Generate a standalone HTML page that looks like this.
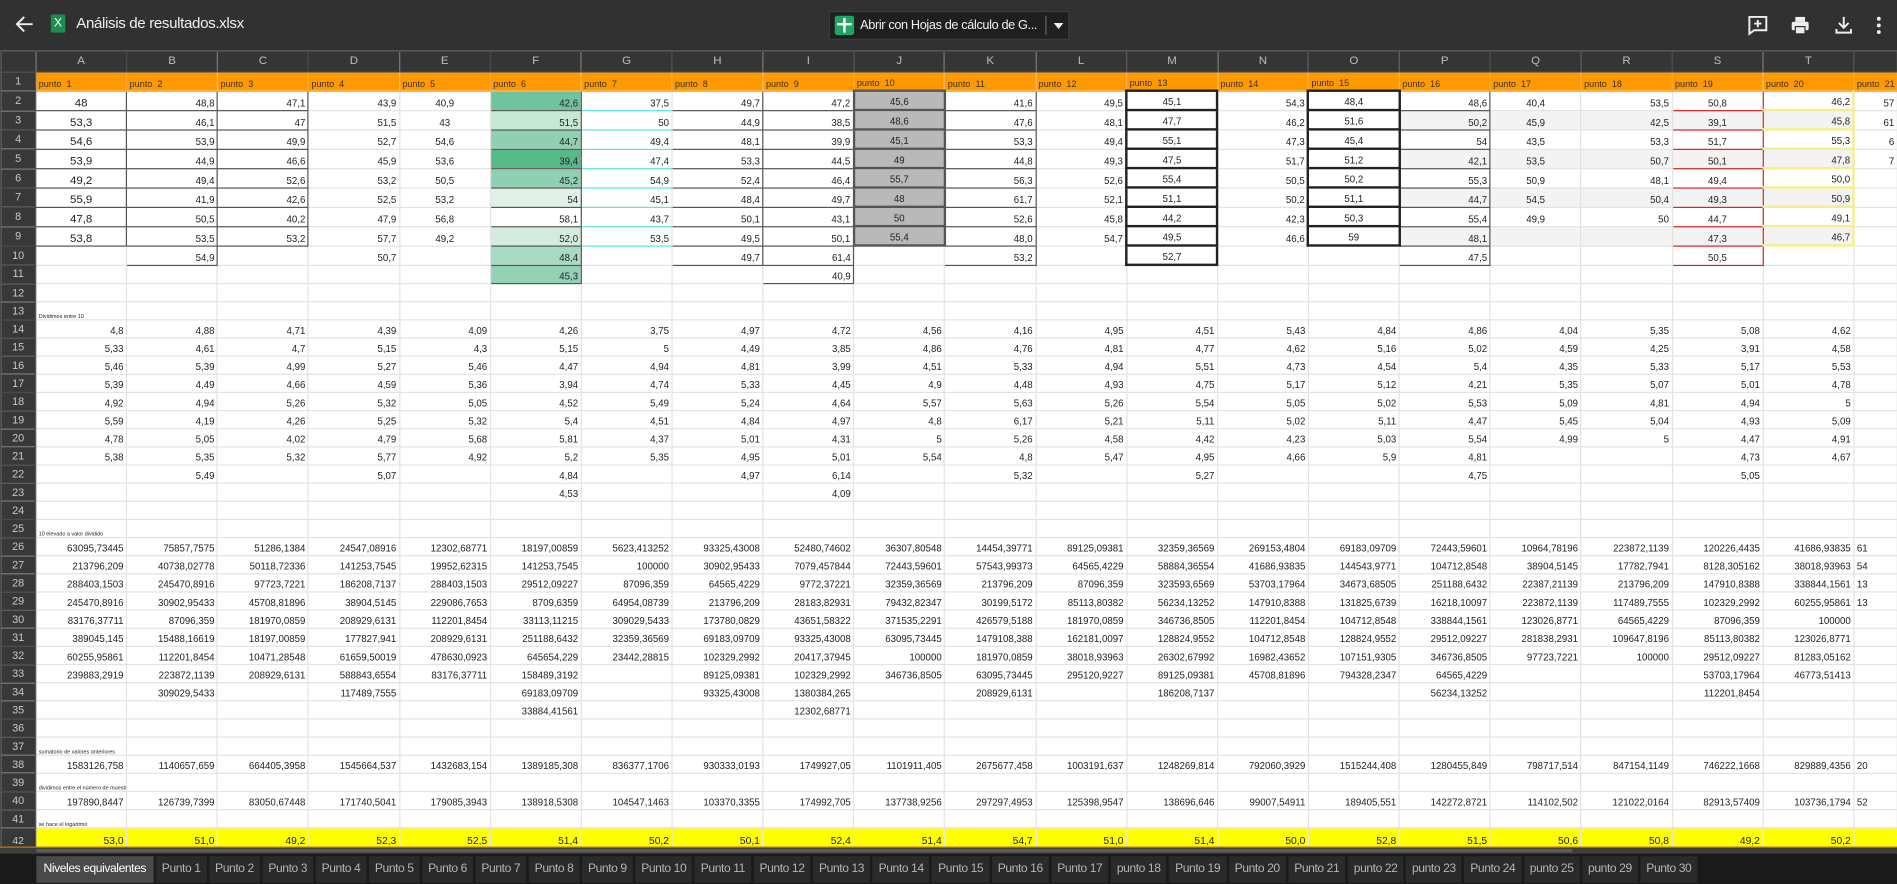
<!DOCTYPE html>
<html><head><meta charset="utf-8">
<style>
html,body{margin:0;padding:0;background:#1e1e1e;overflow:hidden;width:1897px;height:884px}
#w{position:absolute;left:0;top:0;width:1568px;height:731px;transform:scale(1.2098,1.2093);transform-origin:0 0;font-family:"Liberation Sans",sans-serif;background:#1e1e1e;overflow:hidden}
#tb{position:absolute;left:0;top:0;width:1568px;height:42px;background:#313131;border-bottom:1px solid #262626}
#grid{position:absolute;left:0;top:42px;width:1568px;height:659px;overflow:hidden;background:#fff}
table{border-collapse:collapse;table-layout:fixed;width:1568px}
td{border:1px solid #e3e3e3;padding:0 2px;height:14.0px;font-size:8px;line-height:10px;color:#222;text-align:right;vertical-align:bottom;white-space:nowrap;overflow:hidden}
tr.h td{height:16px;background:#353535;color:#bdbdbd;border-color:#4a4a4a;text-align:center;vertical-align:middle;font-size:9.5px}
td.r{background:#383838;color:#c8c8c8;border-color:#4a4a4a;text-align:center;vertical-align:middle;font-size:9px;line-height:9px;padding:0}
tr.o td{background:#ff9900;text-align:left;font-size:7.5px;color:#333;border-color:#ffa733}
tr.o td.r{background:#383838;color:#c8c8c8;border-color:#4a4a4a;text-align:center;font-size:9px}
tr.y td{background:#ffff00;vertical-align:top;font-size:8.5px;line-height:9px;padding-top:6px}
tr.y td.r{background:#383838;padding-top:0;vertical-align:middle}
.c{text-align:center}
.b{border:1px solid #555}
.k{border:2px solid #222}
.g{border-bottom:1px solid #5fe3e3}
.j{background:#b9b9b9;border:2px solid #555;text-align:center}
.s{border:1.5px solid #d22;text-align:center}
.t{border-bottom:2px solid #f3ef8a;border-right:2px solid #f3ef8a}
.q{background:#f3f3f3}
.tiny td{font-size:4.5px;line-height:5px;text-align:left}
.tiny td.r{font-size:9px;line-height:9px;text-align:center}
.L{border-right:1px solid #222}
#tabs{position:absolute;left:0;top:706px;height:25px;width:1568px;background:#1a1a1a;display:flex;align-items:center;padding-left:30px;box-sizing:border-box}
#tabs span{background:#2a2a2a;color:#b5b5b5;font-size:10px;height:22px;line-height:22px;padding:0 5px;margin-right:2px;letter-spacing:-0.35px}
#tabs span.a{background:#4a4a4a;color:#fff;padding:0 6px}
#sb{position:absolute;left:0;top:700px;height:6px;width:1568px;background:#3d3d3d;border-top:1px solid #c87a10}
</style></head><body><div id="w">
<div id="tb">
<svg style="position:absolute;left:12px;top:12px" width="16" height="16" viewBox="0 0 16 16"><path d="M15 8H2M8 2L2 8l6 6" stroke="#eee" stroke-width="1.6" fill="none"/></svg>
<div style="position:absolute;left:42px;top:12px;width:12px;height:15px;background:#1e8e4e;color:#fff;font-size:10px;line-height:15px;text-align:center;border-radius:1px">X</div>
<div style="position:absolute;left:63px;top:12px;color:#f0f0f0;font-size:12.5px;letter-spacing:-0.3px">Análisis de resultados.xlsx</div>
<div style="position:absolute;left:685px;top:9px;width:199px;height:24px;background:#1f1f1f;border:1px solid #3e3e3e;box-sizing:border-box">
<div style="position:absolute;left:4px;top:3px;width:16px;height:16px;background:#1fa463;border-radius:2px"></div>
<div style="position:absolute;left:11px;top:5px;width:2px;height:12px;background:#fff"></div>
<div style="position:absolute;left:6px;top:9px;width:12px;height:2px;background:#fff"></div>
<div style="position:absolute;left:25px;top:5px;color:#f2f2f2;font-size:10.5px;letter-spacing:-0.3px">Abrir con Hojas de cálculo de G...</div>
<div style="position:absolute;left:178px;top:3px;width:1px;height:16px;background:#666"></div>
<div style="position:absolute;left:185px;top:9px;width:0;height:0;border-left:4px solid transparent;border-right:4px solid transparent;border-top:5px solid #eee"></div>
</div>
<svg style="position:absolute;left:1444px;top:12px" width="18" height="18" viewBox="0 0 18 18"><path d="M2 2h14v11H6l-4 3z" stroke="#eee" stroke-width="1.6" fill="none"/><path d="M9 4.5v6M6 7.5h6" stroke="#eee" stroke-width="1.6"/></svg>
<svg style="position:absolute;left:1479px;top:12px" width="18" height="18" viewBox="0 0 18 18"><rect x="5" y="2" width="8" height="4" fill="#eee"/><rect x="2" y="6" width="14" height="7" rx="1.5" fill="#eee"/><rect x="5" y="10" width="8" height="6" fill="#eee" stroke="#313131" stroke-width="1"/></svg>
<svg style="position:absolute;left:1515px;top:12px" width="18" height="18" viewBox="0 0 18 18"><path d="M9 2v9M5 7l4 4 4-4M3 12v3h12v-3" stroke="#eee" stroke-width="1.6" fill="none"/></svg>
<svg style="position:absolute;left:1548px;top:12px" width="10" height="18" viewBox="0 0 10 18"><circle cx="5" cy="3.5" r="1.6" fill="#eee"/><circle cx="5" cy="9" r="1.6" fill="#eee"/><circle cx="5" cy="14.5" r="1.6" fill="#eee"/></svg>
</div>
<div id="grid"><table>
<colgroup><col style="width:29px"><col span="20" style="width:75.15px"><col style="width:36px"></colgroup>
<tr class="h"><td></td><td>A</td><td>B</td><td>C</td><td>D</td><td>E</td><td>F</td><td>G</td><td>H</td><td>I</td><td>J</td><td>K</td><td>L</td><td>M</td><td>N</td><td>O</td><td>P</td><td>Q</td><td>R</td><td>S</td><td>T</td><td></td></tr>
<tr class="o"><td class="r">1</td><td>punto &nbsp;1</td><td>punto &nbsp;2</td><td>punto &nbsp;3</td><td>punto &nbsp;4</td><td>punto &nbsp;5</td><td>punto &nbsp;6</td><td>punto &nbsp;7</td><td>punto &nbsp;8</td><td>punto &nbsp;9</td><td>punto &nbsp;10</td><td>punto &nbsp;11</td><td>punto &nbsp;12</td><td>punto &nbsp;13</td><td>punto &nbsp;14</td><td>punto &nbsp;15</td><td>punto &nbsp;16</td><td>punto &nbsp;17</td><td>punto &nbsp;18</td><td>punto &nbsp;19</td><td>punto &nbsp;20</td><td class="L" style="border-left:1px solid #222">punto &nbsp;21</td></tr>
<tr><td class="r">2</td><td class="c b" style="font-size:9.5px">48</td><td class="b">48,8</td><td class="b">47,1</td><td>43,9</td><td class="c">40,9</td><td class="b" style="background:#6fc49d">42,6</td><td class="g">37,5</td><td class="b">49,7</td><td class="b">47,2</td><td class="j">45,6</td><td class="b">41,6</td><td>49,5</td><td class="c k">45,1</td><td>54,3</td><td class="c k">48,4</td><td class="b">48,6</td><td class="c">40,4</td><td>53,5</td><td class="s">50,8</td><td class="t">46,2</td><td style="border-left:1px solid #222">57</td></tr>
<tr><td class="r">3</td><td class="c b" style="font-size:9.5px">53,3</td><td class="b">46,1</td><td class="b">47</td><td>51,5</td><td class="c">43</td><td class="b" style="background:#c8e8d6">51,5</td><td class="g">50</td><td class="b">44,9</td><td class="b">38,5</td><td class="j">48,6</td><td class="b">47,6</td><td>48,1</td><td class="c k">47,7</td><td>46,2</td><td class="c k">51,6</td><td class="b q">50,2</td><td class="c q">45,9</td><td class="q">42,5</td><td class="s q">39,1</td><td class="t q">45,8</td><td style="border-left:1px solid #222">61</td></tr>
<tr><td class="r">4</td><td class="c b" style="font-size:9.5px">54,6</td><td class="b">53,9</td><td class="b">49,9</td><td>52,7</td><td class="c">54,6</td><td class="b" style="background:#8fd0b2">44,7</td><td class="g">49,4</td><td class="b">48,1</td><td class="b">39,9</td><td class="j">45,1</td><td class="b">53,3</td><td>49,4</td><td class="c k">55,1</td><td>47,3</td><td class="c k">45,4</td><td class="b">54</td><td class="c">43,5</td><td>53,3</td><td class="s">51,7</td><td class="t">55,3</td><td style="border-left:1px solid #222">6</td></tr>
<tr><td class="r">5</td><td class="c b" style="font-size:9.5px">53,9</td><td class="b">44,9</td><td class="b">46,6</td><td>45,9</td><td class="c">53,6</td><td class="b" style="background:#57b98a">39,4</td><td class="g">47,4</td><td class="b">53,3</td><td class="b">44,5</td><td class="j">49</td><td class="b">44,8</td><td>49,3</td><td class="c k">47,5</td><td>51,7</td><td class="c k">51,2</td><td class="b q">42,1</td><td class="c q">53,5</td><td class="q">50,7</td><td class="s q">50,1</td><td class="t q">47,8</td><td style="border-left:1px solid #222">7</td></tr>
<tr><td class="r">6</td><td class="c b" style="font-size:9.5px">49,2</td><td class="b">49,4</td><td class="b">52,6</td><td>53,2</td><td class="c">50,5</td><td class="b" style="background:#8fd0b2">45,2</td><td class="g">54,9</td><td class="b">52,4</td><td class="b">46,4</td><td class="j">55,7</td><td class="b">56,3</td><td>52,6</td><td class="c k">55,4</td><td>50,5</td><td class="c k">50,2</td><td class="b">55,3</td><td class="c">50,9</td><td>48,1</td><td class="s">49,4</td><td class="t">50,0</td><td style="border-left:1px solid #222"></td></tr>
<tr><td class="r">7</td><td class="c b" style="font-size:9.5px">55,9</td><td class="b">41,9</td><td class="b">42,6</td><td>52,5</td><td class="c">53,2</td><td class="b" style="background:#dff1e7">54</td><td class="g">45,1</td><td class="b">48,4</td><td class="b">49,7</td><td class="j">48</td><td class="b">61,7</td><td>52,1</td><td class="c k">51,1</td><td>50,2</td><td class="c k">51,1</td><td class="b q">44,7</td><td class="c q">54,5</td><td class="q">50,4</td><td class="s q">49,3</td><td class="t q">50,9</td><td style="border-left:1px solid #222"></td></tr>
<tr><td class="r">8</td><td class="c b" style="font-size:9.5px">47,8</td><td class="b">50,5</td><td class="b">40,2</td><td>47,9</td><td class="c">56,8</td><td class="b">58,1</td><td class="g">43,7</td><td class="b">50,1</td><td class="b">43,1</td><td class="j">50</td><td class="b">52,6</td><td>45,8</td><td class="c k">44,2</td><td>42,3</td><td class="c k">50,3</td><td class="b">55,4</td><td class="c">49,9</td><td>50</td><td class="s">44,7</td><td class="t">49,1</td><td style="border-left:1px solid #222"></td></tr>
<tr><td class="r">9</td><td class="c b" style="font-size:9.5px">53,8</td><td class="b">53,5</td><td class="b">53,2</td><td>57,7</td><td class="c">49,2</td><td class="b" style="background:#d3ecde">52,0</td><td class="g">53,5</td><td class="b">49,5</td><td class="b">50,1</td><td class="j">55,4</td><td class="b">48,0</td><td>54,7</td><td class="c k">49,5</td><td>46,6</td><td class="c k">59</td><td class="b q">48,1</td><td class="q"></td><td class="q"></td><td class="s q">47,3</td><td class="t q">46,7</td><td style="border-left:1px solid #222"></td></tr>
<tr><td class="r">10</td><td></td><td class="b">54,9</td><td></td><td>50,7</td><td></td><td class="b" style="background:#a8dbc3">48,4</td><td></td><td class="b">49,7</td><td class="b">61,4</td><td></td><td class="b">53,2</td><td></td><td class="c k">52,7</td><td></td><td></td><td class="b">47,5</td><td></td><td></td><td class="s">50,5</td><td></td><td style="border-left:1px solid #222"></td></tr>
<tr><td class="r">11</td><td></td><td></td><td></td><td></td><td></td><td class="b" style="background:#93d2b5">45,3</td><td></td><td></td><td class="b">40,9</td><td></td><td></td><td></td><td></td><td></td><td></td><td></td><td></td><td></td><td></td><td></td><td style="border-left:1px solid #222"></td></tr>
<tr><td class="r">12</td><td></td><td></td><td></td><td></td><td></td><td></td><td></td><td></td><td></td><td></td><td></td><td></td><td></td><td></td><td></td><td></td><td></td><td></td><td></td><td></td><td style="border-left:1px solid #222"></td></tr>
<tr class="tiny"><td class="r">13</td><td>Dividimos entre 10</td><td></td><td></td><td></td><td></td><td></td><td></td><td></td><td></td><td></td><td></td><td></td><td></td><td></td><td></td><td></td><td></td><td></td><td></td><td></td><td style="border-left:1px solid #222"></td></tr>
<tr><td class="r">14</td><td>4,8</td><td>4,88</td><td>4,71</td><td>4,39</td><td>4,09</td><td>4,26</td><td>3,75</td><td>4,97</td><td>4,72</td><td>4,56</td><td>4,16</td><td>4,95</td><td>4,51</td><td>5,43</td><td>4,84</td><td>4,86</td><td>4,04</td><td>5,35</td><td>5,08</td><td>4,62</td><td style="border-left:1px solid #222"></td></tr>
<tr><td class="r">15</td><td>5,33</td><td>4,61</td><td>4,7</td><td>5,15</td><td>4,3</td><td>5,15</td><td>5</td><td>4,49</td><td>3,85</td><td>4,86</td><td>4,76</td><td>4,81</td><td>4,77</td><td>4,62</td><td>5,16</td><td>5,02</td><td>4,59</td><td>4,25</td><td>3,91</td><td>4,58</td><td style="border-left:1px solid #222"></td></tr>
<tr><td class="r">16</td><td>5,46</td><td>5,39</td><td>4,99</td><td>5,27</td><td>5,46</td><td>4,47</td><td>4,94</td><td>4,81</td><td>3,99</td><td>4,51</td><td>5,33</td><td>4,94</td><td>5,51</td><td>4,73</td><td>4,54</td><td>5,4</td><td>4,35</td><td>5,33</td><td>5,17</td><td>5,53</td><td style="border-left:1px solid #222"></td></tr>
<tr><td class="r">17</td><td>5,39</td><td>4,49</td><td>4,66</td><td>4,59</td><td>5,36</td><td>3,94</td><td>4,74</td><td>5,33</td><td>4,45</td><td>4,9</td><td>4,48</td><td>4,93</td><td>4,75</td><td>5,17</td><td>5,12</td><td>4,21</td><td>5,35</td><td>5,07</td><td>5,01</td><td>4,78</td><td style="border-left:1px solid #222"></td></tr>
<tr><td class="r">18</td><td>4,92</td><td>4,94</td><td>5,26</td><td>5,32</td><td>5,05</td><td>4,52</td><td>5,49</td><td>5,24</td><td>4,64</td><td>5,57</td><td>5,63</td><td>5,26</td><td>5,54</td><td>5,05</td><td>5,02</td><td>5,53</td><td>5,09</td><td>4,81</td><td>4,94</td><td>5</td><td style="border-left:1px solid #222"></td></tr>
<tr><td class="r">19</td><td>5,59</td><td>4,19</td><td>4,26</td><td>5,25</td><td>5,32</td><td>5,4</td><td>4,51</td><td>4,84</td><td>4,97</td><td>4,8</td><td>6,17</td><td>5,21</td><td>5,11</td><td>5,02</td><td>5,11</td><td>4,47</td><td>5,45</td><td>5,04</td><td>4,93</td><td>5,09</td><td style="border-left:1px solid #222"></td></tr>
<tr><td class="r">20</td><td>4,78</td><td>5,05</td><td>4,02</td><td>4,79</td><td>5,68</td><td>5,81</td><td>4,37</td><td>5,01</td><td>4,31</td><td>5</td><td>5,26</td><td>4,58</td><td>4,42</td><td>4,23</td><td>5,03</td><td>5,54</td><td>4,99</td><td>5</td><td>4,47</td><td>4,91</td><td style="border-left:1px solid #222"></td></tr>
<tr><td class="r">21</td><td>5,38</td><td>5,35</td><td>5,32</td><td>5,77</td><td>4,92</td><td>5,2</td><td>5,35</td><td>4,95</td><td>5,01</td><td>5,54</td><td>4,8</td><td>5,47</td><td>4,95</td><td>4,66</td><td>5,9</td><td>4,81</td><td></td><td></td><td>4,73</td><td>4,67</td><td style="border-left:1px solid #222"></td></tr>
<tr><td class="r">22</td><td></td><td>5,49</td><td></td><td>5,07</td><td></td><td>4,84</td><td></td><td>4,97</td><td>6,14</td><td></td><td>5,32</td><td></td><td>5,27</td><td></td><td></td><td>4,75</td><td></td><td></td><td>5,05</td><td></td><td style="border-left:1px solid #222"></td></tr>
<tr><td class="r">23</td><td></td><td></td><td></td><td></td><td></td><td>4,53</td><td></td><td></td><td>4,09</td><td></td><td></td><td></td><td></td><td></td><td></td><td></td><td></td><td></td><td></td><td></td><td style="border-left:1px solid #222"></td></tr>
<tr><td class="r">24</td><td></td><td></td><td></td><td></td><td></td><td></td><td></td><td></td><td></td><td></td><td></td><td></td><td></td><td></td><td></td><td></td><td></td><td></td><td></td><td></td><td style="border-left:1px solid #222"></td></tr>
<tr class="tiny"><td class="r">25</td><td>10 elevado a valor dividido</td><td></td><td></td><td></td><td></td><td></td><td></td><td></td><td></td><td></td><td></td><td></td><td></td><td></td><td></td><td></td><td></td><td></td><td></td><td></td><td style="border-left:1px solid #222"></td></tr>
<tr><td class="r">26</td><td>63095,73445</td><td>75857,7575</td><td>51286,1384</td><td>24547,08916</td><td>12302,68771</td><td>18197,00859</td><td>5623,413252</td><td>93325,43008</td><td>52480,74602</td><td>36307,80548</td><td>14454,39771</td><td>89125,09381</td><td>32359,36569</td><td>269153,4804</td><td>69183,09709</td><td>72443,59601</td><td>10964,78196</td><td>223872,1139</td><td>120226,4435</td><td>41686,93835</td><td style="border-left:1px solid #222;text-align:left">61</td></tr>
<tr><td class="r">27</td><td>213796,209</td><td>40738,02778</td><td>50118,72336</td><td>141253,7545</td><td>19952,62315</td><td>141253,7545</td><td>100000</td><td>30902,95433</td><td>7079,457844</td><td>72443,59601</td><td>57543,99373</td><td>64565,4229</td><td>58884,36554</td><td>41686,93835</td><td>144543,9771</td><td>104712,8548</td><td>38904,5145</td><td>17782,7941</td><td>8128,305162</td><td>38018,93963</td><td style="border-left:1px solid #222;text-align:left">54</td></tr>
<tr><td class="r">28</td><td>288403,1503</td><td>245470,8916</td><td>97723,7221</td><td>186208,7137</td><td>288403,1503</td><td>29512,09227</td><td>87096,359</td><td>64565,4229</td><td>9772,37221</td><td>32359,36569</td><td>213796,209</td><td>87096,359</td><td>323593,6569</td><td>53703,17964</td><td>34673,68505</td><td>251188,6432</td><td>22387,21139</td><td>213796,209</td><td>147910,8388</td><td>338844,1561</td><td style="border-left:1px solid #222;text-align:left">13</td></tr>
<tr><td class="r">29</td><td>245470,8916</td><td>30902,95433</td><td>45708,81896</td><td>38904,5145</td><td>229086,7653</td><td>8709,6359</td><td>64954,08739</td><td>213796,209</td><td>28183,82931</td><td>79432,82347</td><td>30199,5172</td><td>85113,80382</td><td>56234,13252</td><td>147910,8388</td><td>131825,6739</td><td>16218,10097</td><td>223872,1139</td><td>117489,7555</td><td>102329,2992</td><td>60255,95861</td><td style="border-left:1px solid #222;text-align:left">13</td></tr>
<tr><td class="r">30</td><td>83176,37711</td><td>87096,359</td><td>181970,0859</td><td>208929,6131</td><td>112201,8454</td><td>33113,11215</td><td>309029,5433</td><td>173780,0829</td><td>43651,58322</td><td>371535,2291</td><td>426579,5188</td><td>181970,0859</td><td>346736,8505</td><td>112201,8454</td><td>104712,8548</td><td>338844,1561</td><td>123026,8771</td><td>64565,4229</td><td>87096,359</td><td>100000</td><td style="border-left:1px solid #222"></td></tr>
<tr><td class="r">31</td><td>389045,145</td><td>15488,16619</td><td>18197,00859</td><td>177827,941</td><td>208929,6131</td><td>251188,6432</td><td>32359,36569</td><td>69183,09709</td><td>93325,43008</td><td>63095,73445</td><td>1479108,388</td><td>162181,0097</td><td>128824,9552</td><td>104712,8548</td><td>128824,9552</td><td>29512,09227</td><td>281838,2931</td><td>109647,8196</td><td>85113,80382</td><td>123026,8771</td><td style="border-left:1px solid #222"></td></tr>
<tr><td class="r">32</td><td>60255,95861</td><td>112201,8454</td><td>10471,28548</td><td>61659,50019</td><td>478630,0923</td><td>645654,229</td><td>23442,28815</td><td>102329,2992</td><td>20417,37945</td><td>100000</td><td>181970,0859</td><td>38018,93963</td><td>26302,67992</td><td>16982,43652</td><td>107151,9305</td><td>346736,8505</td><td>97723,7221</td><td>100000</td><td>29512,09227</td><td>81283,05162</td><td style="border-left:1px solid #222"></td></tr>
<tr><td class="r">33</td><td>239883,2919</td><td>223872,1139</td><td>208929,6131</td><td>588843,6554</td><td>83176,37711</td><td>158489,3192</td><td></td><td>89125,09381</td><td>102329,2992</td><td>346736,8505</td><td>63095,73445</td><td>295120,9227</td><td>89125,09381</td><td>45708,81896</td><td>794328,2347</td><td>64565,4229</td><td></td><td></td><td>53703,17964</td><td>46773,51413</td><td style="border-left:1px solid #222"></td></tr>
<tr><td class="r">34</td><td></td><td>309029,5433</td><td></td><td>117489,7555</td><td></td><td>69183,09709</td><td></td><td>93325,43008</td><td>1380384,265</td><td></td><td>208929,6131</td><td></td><td>186208,7137</td><td></td><td></td><td>56234,13252</td><td></td><td></td><td>112201,8454</td><td></td><td style="border-left:1px solid #222"></td></tr>
<tr><td class="r">35</td><td></td><td></td><td></td><td></td><td></td><td>33884,41561</td><td></td><td></td><td>12302,68771</td><td></td><td></td><td></td><td></td><td></td><td></td><td></td><td></td><td></td><td></td><td></td><td style="border-left:1px solid #222"></td></tr>
<tr><td class="r">36</td><td></td><td></td><td></td><td></td><td></td><td></td><td></td><td></td><td></td><td></td><td></td><td></td><td></td><td></td><td></td><td></td><td></td><td></td><td></td><td></td><td style="border-left:1px solid #222"></td></tr>
<tr class="tiny"><td class="r">37</td><td>sumatorio de valores anteriores</td><td></td><td></td><td></td><td></td><td></td><td></td><td></td><td></td><td></td><td></td><td></td><td></td><td></td><td></td><td></td><td></td><td></td><td></td><td></td><td style="border-left:1px solid #222"></td></tr>
<tr><td class="r">38</td><td>1583126,758</td><td>1140657,659</td><td>664405,3958</td><td>1545664,537</td><td>1432683,154</td><td>1389185,308</td><td>836377,1706</td><td>930333,0193</td><td>1749927,05</td><td>1101911,405</td><td>2675677,458</td><td>1003191,637</td><td>1248269,814</td><td>792060,3929</td><td>1515244,408</td><td>1280455,849</td><td>798717,514</td><td>847154,1149</td><td>746222,1668</td><td>829889,4356</td><td style="border-left:1px solid #222;text-align:left">20</td></tr>
<tr class="tiny"><td class="r">39</td><td>dividimos entre el número de muestras</td><td></td><td></td><td></td><td></td><td></td><td></td><td></td><td></td><td></td><td></td><td></td><td></td><td></td><td></td><td></td><td></td><td></td><td></td><td></td><td style="border-left:1px solid #222"></td></tr>
<tr><td class="r">40</td><td>197890,8447</td><td>126739,7399</td><td>83050,67448</td><td>171740,5041</td><td>179085,3943</td><td>138918,5308</td><td>104547,1463</td><td>103370,3355</td><td>174992,705</td><td>137738,9256</td><td>297297,4953</td><td>125398,9547</td><td>138696,646</td><td>99007,54911</td><td>189405,551</td><td>142272,8721</td><td>114102,502</td><td>121022,0164</td><td>82913,57409</td><td>103736,1794</td><td style="border-left:1px solid #222;text-align:left">52</td></tr>
<tr class="tiny"><td class="r">41</td><td>se hace el logaritmo</td><td></td><td></td><td></td><td></td><td></td><td></td><td></td><td></td><td></td><td></td><td></td><td></td><td></td><td></td><td></td><td></td><td></td><td></td><td></td><td style="border-left:1px solid #222"></td></tr>
<tr class="y"><td class="r">42</td><td>53,0</td><td>51,0</td><td>49,2</td><td>52,3</td><td>52,5</td><td>51,4</td><td>50,2</td><td>50,1</td><td>52,4</td><td>51,4</td><td>54,7</td><td>51,0</td><td>51,4</td><td>50,0</td><td>52,8</td><td>51,5</td><td>50,6</td><td>50,8</td><td>49,2</td><td>50,2</td><td style="border-left:1px solid #222"></td></tr>
<tr><td class="r">43</td><td></td><td></td><td></td><td></td><td></td><td></td><td></td><td></td><td></td><td></td><td></td><td></td><td></td><td></td><td></td><td></td><td></td><td></td><td></td><td></td><td></td></tr>
</table></div>
<div id="sb"><div style="position:absolute;left:30px;top:1px;width:1270px;height:3px;background:#5a5a5a;border-radius:2px"></div></div>
<div id="tabs"><span class="a">Niveles equivalentes</span><span>Punto 1</span><span>Punto 2</span><span>Punto 3</span><span>Punto 4</span><span>Punto 5</span><span>Punto 6</span><span>Punto 7</span><span>Punto 8</span><span>Punto 9</span><span>Punto 10</span><span>Punto 11</span><span>Punto 12</span><span>Punto 13</span><span>Punto 14</span><span>Punto 15</span><span>Punto 16</span><span>Punto 17</span><span>punto 18</span><span>Punto 19</span><span>Punto 20</span><span>Punto 21</span><span>punto 22</span><span>punto 23</span><span>Punto 24</span><span>punto 25</span><span>punto 29</span><span>Punto 30</span></div>
</div></body></html>
